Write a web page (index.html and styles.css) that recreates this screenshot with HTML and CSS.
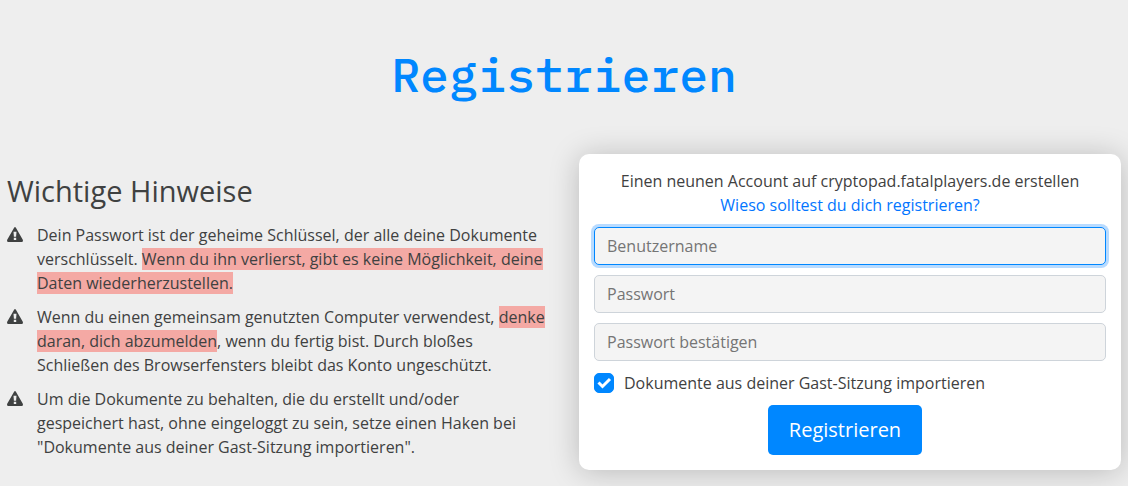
FILE: index.html
```html
<!DOCTYPE html>
<html lang="de">
<head>
<meta charset="utf-8">
<meta name="viewport" content="width=device-width, initial-scale=1">
<title>Registrieren</title>
<link rel="stylesheet" href="styles.css">
</head>
<body>
<svg class="sprite" aria-hidden="true">
  <symbol id="warning" viewBox="0 0 16 15">
    <path fill-rule="evenodd" d="M7.100 0.700Q8 -0.600 8.900 0.700L15.800 12.800Q16.400 14.700 14.700 15H1.300Q-0.400 14.700 0.200 12.800ZM6.500 4.800L6.900 9.800H9.100L9.500 4.800ZM6.800 10.800V13H9.200V10.800Z"/>
  </symbol>
</svg>
<main class="page">
  <h1 class="title">Registrieren</h1>
  <div class="columns">
    <section class="notes">
      <h2 class="notes-title">Wichtige Hinweise</h2>
      <ul class="notes-list">
        <li class="note"><svg class="note-icon" aria-hidden="true"><use href="#warning"/></svg>
          <p class="note-text">Dein Passwort ist der geheime Schlüssel, der alle deine Dokumente verschlüsselt. <span class="alert">Wenn du ihn verlierst, gibt es keine Möglichkeit, deine Daten wiederherzustellen.</span></p></li>
        <li class="note"><svg class="note-icon" aria-hidden="true"><use href="#warning"/></svg>
          <p class="note-text">Wenn du einen gemeinsam genutzten Computer verwendest, <span class="alert">denke daran, dich abzumelden</span>, wenn du fertig bist. Durch bloßes Schließen des Browserfensters bleibt das Konto ungeschützt.</p></li>
        <li class="note"><svg class="note-icon" aria-hidden="true"><use href="#warning"/></svg>
          <p class="note-text">Um die Dokumente zu behalten, die du erstellt und/oder gespeichert hast, ohne eingeloggt zu sein, setze einen Haken bei "Dokumente aus deiner Gast-Sitzung importieren".</p></li>
      </ul>
    </section>
    <form class="card">
      <p class="intro">Einen neunen Account auf cryptopad.fatalplayers.de erstellen<br><a class="link" href="#">Wieso solltest du dich registrieren?</a></p>
      <input class="field field-active" type="text" placeholder="Benutzername" aria-label="Benutzername">
      <input class="field" type="password" placeholder="Passwort" aria-label="Passwort">
      <input class="field" type="password" placeholder="Passwort bestätigen" aria-label="Passwort bestätigen">
      <div class="check-row">
        <span class="check">
          <input class="check-input" type="checkbox" id="import" checked>
          <svg class="check-mark" viewBox="0 0 20 20" aria-hidden="true"><path d="M4.500 9.500L8.500 13.500L16 6"/></svg>
        </span>
        <label for="import">Dokumente aus deiner Gast-Sitzung importieren</label>
      </div>
      <button class="submit" type="button">Registrieren</button>
    </form>
  </div>
</main>
</body>
</html>
```

FILE: styles.css
```css
* {
  box-sizing: border-box;
}

body {
  margin: 0;
  background: #eee;
  color: #3f4141;
  font: 16px/24px "Open Sans", "Noto Sans", sans-serif;
}

h1, h2, p, ul {
  margin: 0;
  padding: 0;
}

.sprite {
  display: none;
}

.page {
  padding: 45px 7px 16px;
}

.title {
  margin-bottom: 51px;
  color: #0087ff;
  font: 500 48px/58px "IBM Plex Mono", "Liberation Mono", monospace;
  text-align: center;
}

.columns {
  display: grid;
  grid-template-columns: 1fr 1fr;
  gap: 30px;
  align-items: start;
}

.notes {
  padding-top: 19px;
}

.notes-title {
  margin-bottom: 15px;
  font-size: 29px;
  font-weight: 400;
  line-height: 35px;
}

.notes-list {
  display: grid;
  gap: 10px;
  list-style: none;
}

.note {
  display: flex;
  gap: 14px;
}

.note-icon {
  flex: none;
  width: 16px;
  height: 24px;
  padding: 4px 0 5px;
  fill: #3f4141;
}

.alert {
  background: #f4a9a4;
}

.card {
  display: flex;
  flex-direction: column;
  padding: 15px;
  border-radius: 10px;
  background: #fff;
  box-shadow: 0 2px 30px rgba(0, 0, 0, 0.22);
}

.intro {
  margin-bottom: 10px;
  text-align: center;
}

.link {
  color: #0275ff;
  text-decoration: none;
}

.field {
  width: 100%;
  height: 38px;
  margin-bottom: 10px;
  padding: 6px 12px;
  border: 1px solid #ced4da;
  border-radius: 5px;
  background: #f4f4f4;
  color: inherit;
  font: inherit;
}

.field::placeholder {
  color: #757575;
}

.field-active {
  border-color: #0087ff;
  box-shadow: 0 0 0 3px #b8dbff;
}

.check-row {
  display: flex;
  align-items: center;
  gap: 10px;
  margin-bottom: 10px;
}

.check {
  display: grid;
  width: 20px;
  height: 20px;
}

.check-input,
.check-mark {
  grid-area: 1 / 1;
  width: 20px;
  height: 20px;
  margin: 0;
}

.check-input {
  appearance: none;
  border: 1px solid #0087ff;
  border-radius: 5px;
}

.check-input:checked {
  background: #0087ff;
}

.check-mark {
  fill: none;
  stroke: #fff;
  stroke-width: 3;
  pointer-events: none;
}

.submit {
  align-self: center;
  margin-right: 10px;
  padding: 10px 21px;
  border: 0;
  border-radius: 5px;
  background: #0087ff;
  color: #fff;
  font: 20px/30px "Open Sans", "Noto Sans", sans-serif;
}
```
